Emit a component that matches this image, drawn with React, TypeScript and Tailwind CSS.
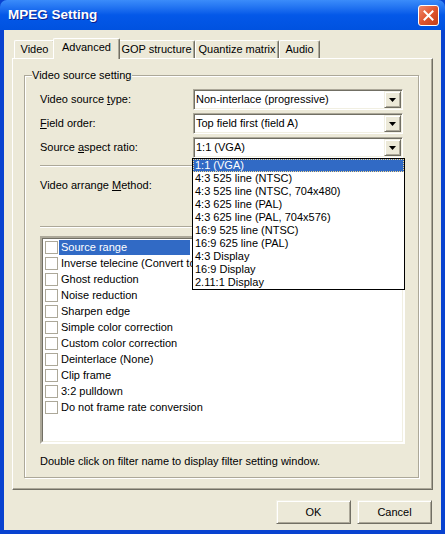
import React from 'react';

const sunken =
  'border border-t-[#ACA899] border-l-[#ACA899] border-r-white border-b-white shadow-[inset_1px_1px_0_#716F64,inset_-1px_-1px_0_#F1EFE2]';
const raised =
  'border border-t-[#F1EFE2] border-l-[#F1EFE2] border-r-[#716F64] border-b-[#716F64] shadow-[inset_1px_1px_0_#fff,inset_-1px_-1px_0_#ACA899]';

function Arrow() {
  return (
    <svg width="7" height="4" viewBox="0 0 7 4" className="block">
      <path d="M0 0h7L3.5 4z" fill="#000" />
    </svg>
  );
}

function Combo({ value }: { value: string }) {
  return (
    <div className={`w-[210px] h-[21px] bg-white flex items-center ${sunken}`}>
      <span className="flex-1 pl-[2px] leading-[13px] whitespace-nowrap">{value}</span>
      <div className={`w-[17px] h-[17px] mr-px bg-[#ECE9D8] flex items-center justify-center ${raised}`}>
        <Arrow />
      </div>
    </div>
  );
}

function Etched() {
  return <div className="h-0 border-t border-[#ACA899] border-b border-b-white w-[363px]" />;
}

const tabs = ['Video', 'Advanced', 'GOP structure', 'Quantize matrix', 'Audio'];
const tabWidths = ['w-[41px]', 'w-[67px]', 'w-[77px]', 'w-[84px]', 'w-[41px]'];

const aspectOptions = [
  '1:1 (VGA)',
  '4:3 525 line (NTSC)',
  '4:3 525 line (NTSC, 704x480)',
  '4:3 625 line (PAL)',
  '4:3 625 line (PAL, 704x576)',
  '16:9 525 line (NTSC)',
  '16:9 625 line (PAL)',
  '4:3 Display',
  '16:9 Display',
  '2.11:1 Display',
];

const filters = [
  'Source range',
  'Inverse telecine (Convert to 24fps)',
  'Ghost reduction',
  'Noise reduction',
  'Sharpen edge',
  'Simple color correction',
  'Custom color correction',
  'Deinterlace (None)',
  'Clip frame',
  '3:2 pulldown',
  'Do not frame rate conversion',
];

export default function App() {
  return (
    <div className="w-[445px] h-[534px] bg-[#0842D0] flex flex-col font-['Liberation_Sans',Arial,sans-serif] text-[11px] text-black select-none overflow-hidden">
      {/* Title bar */}
      <div className="h-[30px] shrink-0 flex items-center justify-between pl-[8px] pr-[6px] rounded-t-[7px] bg-gradient-to-b from-[#3B8CFA] via-[#0458E8] to-[#0052E0]">
        <span className="text-white font-bold text-[13.5px] [text-shadow:1px_1px_0_#0A1E8A]">MPEG Setting</span>
        <div className="w-[21px] h-[21px] rounded-[3px] border border-white bg-gradient-to-br from-[#F0876A] via-[#E0552E] to-[#C23E18] flex items-center justify-center">
          <svg width="11" height="11" viewBox="0 0 11 11">
            <path d="M1.5 1.5l8 8M9.5 1.5l-8 8" stroke="#fff" strokeWidth="2" strokeLinecap="square" />
          </svg>
        </div>
      </div>

      {/* Client area */}
      <div className="flex-1 mx-[4px] mb-[4px] bg-[#ECE9D8] flex flex-col">
        {/* Tabs */}
        <div className="flex items-end h-[28px] pl-[10px]">
          {tabs.map((t, i) => {
            const active = i === 1;
            return (
              <div
                key={t}
                className={`${tabWidths[i]} relative flex items-center justify-center bg-[#ECE9D8] border-l border-t border-white border-r border-r-[#716F64] rounded-t-[2px] shadow-[inset_-1px_0_0_#ACA899] ${
                  active ? 'h-[21px] -mb-px z-10 -mx-[2px] pb-[3px]' : 'h-[18px]'
                }`}
              >
                {t}
              </div>
            );
          })}
        </div>

        {/* Tab panel */}
        <div className="ml-[8px] w-[421px] h-[432px] border-l border-t border-white border-r border-b border-r-[#716F64] border-b-[#716F64] shadow-[inset_-1px_-1px_0_#ACA899] pl-[11px] pt-[16px]">
          {/* Group box */}
          <div className="relative w-[395px] h-[403px] border border-[#ACA899] shadow-[inset_1px_1px_0_#fff,1px_1px_0_#fff] pl-[15px] pt-[13px] flex flex-col">
            <span className="absolute left-[7px] -top-[7px] bg-[#ECE9D8] pr-[1px] leading-[13px]">Video source setting</span>

            <div className="flex items-center h-[21px]">
              <span className="w-[153px]">
                Video source <u>t</u>ype:
              </span>
              <Combo value="Non-interlace (progressive)" />
            </div>
            <div className="flex items-center h-[21px] mt-[3px]">
              <span className="w-[153px]">
                <u>F</u>ield order:
              </span>
              <Combo value="Top field first (field A)" />
            </div>
            <div className="flex items-center h-[21px] mt-[3px] relative">
              <span className="w-[153px]">
                Source <u>a</u>spect ratio:
              </span>
              <Combo value="1:1 (VGA)" />
              {/* Open dropdown list */}
              <div className="absolute left-[152px] top-[21px] w-[213px] bg-white border border-black z-20">
                {aspectOptions.map((o, i) => (
                  <div
                    key={o}
                    className={`h-[13px] leading-[13px] pl-[2px] whitespace-nowrap ${
                      i === 0 ? 'bg-[#316AC5] text-white outline-1 outline-dotted outline-[#F5D78E] -outline-offset-1' : ''
                    }`}
                  >
                    {o}
                  </div>
                ))}
              </div>
            </div>

            <div className="mt-[7px]">
              <Etched />
            </div>
            <div className="mt-[12px] leading-[13px]">
              Video arrange <u>M</u>ethod:
            </div>
            <div className="mt-[34px]">
              <Etched />
            </div>

            {/* Filter list */}
            <div className="mt-[8px] w-[365px] h-[208px] bg-white border-2 border-t-[#ACA899] border-l-[#ACA899] border-r-white border-b-white">
              <div className="h-full border border-t-[#716F64] border-l-[#716F64] border-r-[#F1EFE2] border-b-[#F1EFE2] pl-[2px] flex flex-col">
                {filters.map((f, i) => (
                  <div key={f} className="h-[16px] flex items-center shrink-0">
                    <div className="w-[13px] h-[13px] border border-[#ACA899] bg-white shrink-0" />
                    <span
                      className={`ml-[1px] h-[15px] leading-[15px] pl-[2px] whitespace-nowrap ${
                        i === 0 ? 'bg-[#316AC5] text-white w-[131px]' : ''
                      }`}
                    >
                      {f}
                    </span>
                  </div>
                ))}
              </div>
            </div>

            <div className="mt-[11px] leading-[13px]">Double click on filter name to display filter setting window.</div>
          </div>
        </div>

        {/* Buttons */}
        <div className="flex justify-end gap-[6px] mt-[10px] mr-[9px]">
          <button className={`w-[75px] h-[24px] bg-[#ECE9D8] ${raised}`}>OK</button>
          <button className={`w-[75px] h-[24px] bg-[#ECE9D8] ${raised}`}>Cancel</button>
        </div>
      </div>
    </div>
  );
}
